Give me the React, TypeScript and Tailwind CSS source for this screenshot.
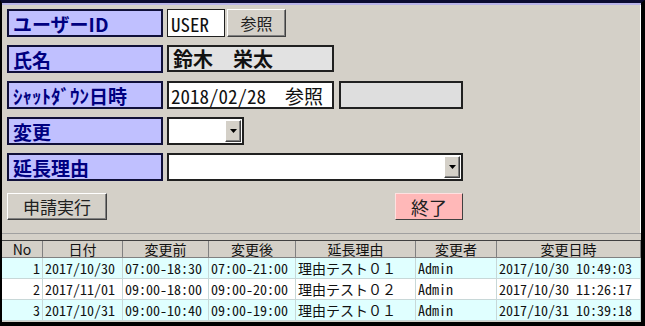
import React from "react";

const jp = "font-['Noto_Sans_CJK_JP',sans-serif]";
const mono = "font-['Noto_Sans_Mono_CJK_JP','Noto_Sans_CJK_JP',monospace]";

const raised =
  "border border-t-white border-l-white border-r-[#404040] border-b-[#404040] shadow-[inset_-1px_-1px_0_#808080] bg-[#d4d0c8]";

const rows = [
  { no: 1, date: "2017/10/30", before: "07:00-18:30", after: "07:00-21:00", reason: "理由テスト０１", user: "Admin", at: "2017/10/30 10:49:03" },
  { no: 2, date: "2017/11/01", before: "09:00-18:00", after: "09:00-20:00", reason: "理由テスト０２", user: "Admin", at: "2017/10/30 11:26:17" },
  { no: 3, date: "2017/10/31", before: "09:00-10:40", after: "09:00-19:00", reason: "理由テスト０１", user: "Admin", at: "2017/10/31 10:39:18" },
];

const headers = ["No", "日付", "変更前", "変更後", "延長理由", "変更者", "変更日時"];

function Label({ text }: { text: string }) {
  return (
    <div className="w-[156px] h-[28px] shrink-0 bg-[#c0c0ff] border-2 border-[#10103a] flex items-center pl-[4px] text-[19px] font-bold text-[#000080] leading-none">
      {text}
    </div>
  );
}

function DropArrow() {
  return (
    <div className={`w-[16px] h-full flex items-center justify-center ${raised}`}>
      <svg width="7" height="4" viewBox="0 0 7 4">
        <polygon points="0,0 7,0 3.5,4" fill="#000" />
      </svg>
    </div>
  );
}

export default function App() {
  const grid = "grid grid-cols-[41px_80px_86px_87px_120px_81px_144px]";
  const cell = "h-[21px] flex items-center leading-none border-r border-b border-[#c8d8d8] whitespace-nowrap";

  return (
    <div className={`w-[645px] h-[326px] overflow-hidden bg-[#d4d0c8] border-t-[3px] border-t-[#0a0a30] border-l-2 border-l-black border-r-4 border-r-black border-b-4 border-b-black ${jp}`}>
      <div className="border-t-2 border-t-[#b8b4e8]" />

      {/* form */}
      <div className="h-[228px] border-r border-r-white pl-[5px] pt-[4px] flex flex-col gap-[8px]">
        <div className="flex gap-[4px]">
          <Label text="ユーザーID" />
          <div className={`w-[58px] h-[28px] bg-white border border-[#202020] flex items-center pl-[3px] text-[19px] text-[#101010] leading-none ${mono}`}>
            USER
          </div>
          <button className={`ml-[-2px] w-[59px] h-[28px] text-[16px] text-[#202020] leading-none ${raised}`}>参照</button>
        </div>

        <div className="flex gap-[4px]">
          <Label text="氏名" />
          <div className="w-[167px] h-[27px] bg-[#e2e2e2] border-2 border-[#202020] flex items-center pl-[4px] text-[20px] font-bold text-[#111] leading-none">
            鈴木　栄太
          </div>
        </div>

        <div className="flex gap-[4px]">
          <Label text="ｼｬｯﾄﾀﾞｳﾝ日時" />
          <div className={`w-[167px] h-[28px] bg-white border-2 border-[#202020] flex items-center pl-[2px] text-[19px] text-[#111] leading-none ${mono}`}>
            2018/02/28　参照
          </div>
          <div className="ml-[1px] w-[124px] h-[28px] bg-[#dedede] border-2 border-[#202020]" />
        </div>

        <div className="flex gap-[4px]">
          <Label text="変更" />
          <div className="w-[77px] h-[28px] bg-white border-2 border-[#202020] flex justify-end p-[1px]">
            <DropArrow />
          </div>
        </div>

        <div className="flex gap-[4px]">
          <Label text="延長理由" />
          <div className="w-[296px] h-[28px] bg-white border-2 border-[#202020] flex justify-end p-[1px]">
            <DropArrow />
          </div>
        </div>

        <div className="flex items-start mt-[4px] w-[456px] justify-between">
          <button className={`w-[100px] h-[27px] text-[17px] text-[#202020] leading-none ${raised}`}>申請実行</button>
          <button className="w-[68px] h-[27px] bg-[#ffb8b8] border border-t-[#ffe0e0] border-l-[#ffe0e0] border-r-[#404040] border-b-[#404040] text-[18px] text-[#202020] leading-none">
            終了
          </button>
        </div>
      </div>

      {/* list */}
      <div className="border-t border-t-[#a0a0a0] pt-[6px]">
        <div className={`${grid} border-t border-t-[#404040] bg-[#d4d0c8] text-[14px] text-[#111] ${jp}`}>
          {headers.map((h) => (
            <div key={h} className="h-[17px] flex items-center justify-center leading-none border-r border-b border-[#808080]">
              {h}
            </div>
          ))}
        </div>
        {rows.map((r, i) => (
          <div key={r.no} className={`${grid} ${i % 2 === 0 ? "bg-[#e0ffff]" : "bg-white"} text-[14px] text-[#111] ${mono}`}>
            <div className={`${cell} justify-end pr-[2px]`}>{r.no}</div>
            <div className={`${cell} pl-[2px]`}>{r.date}</div>
            <div className={`${cell} pl-[2px]`}>{r.before}</div>
            <div className={`${cell} pl-[2px]`}>{r.after}</div>
            <div className={`${cell} pl-[2px] ${jp}`}>{r.reason}</div>
            <div className={`${cell} pl-[2px]`}>{r.user}</div>
            <div className={`${cell} pl-[2px]`}>{r.at}</div>
          </div>
        ))}
      </div>
    </div>
  );
}
